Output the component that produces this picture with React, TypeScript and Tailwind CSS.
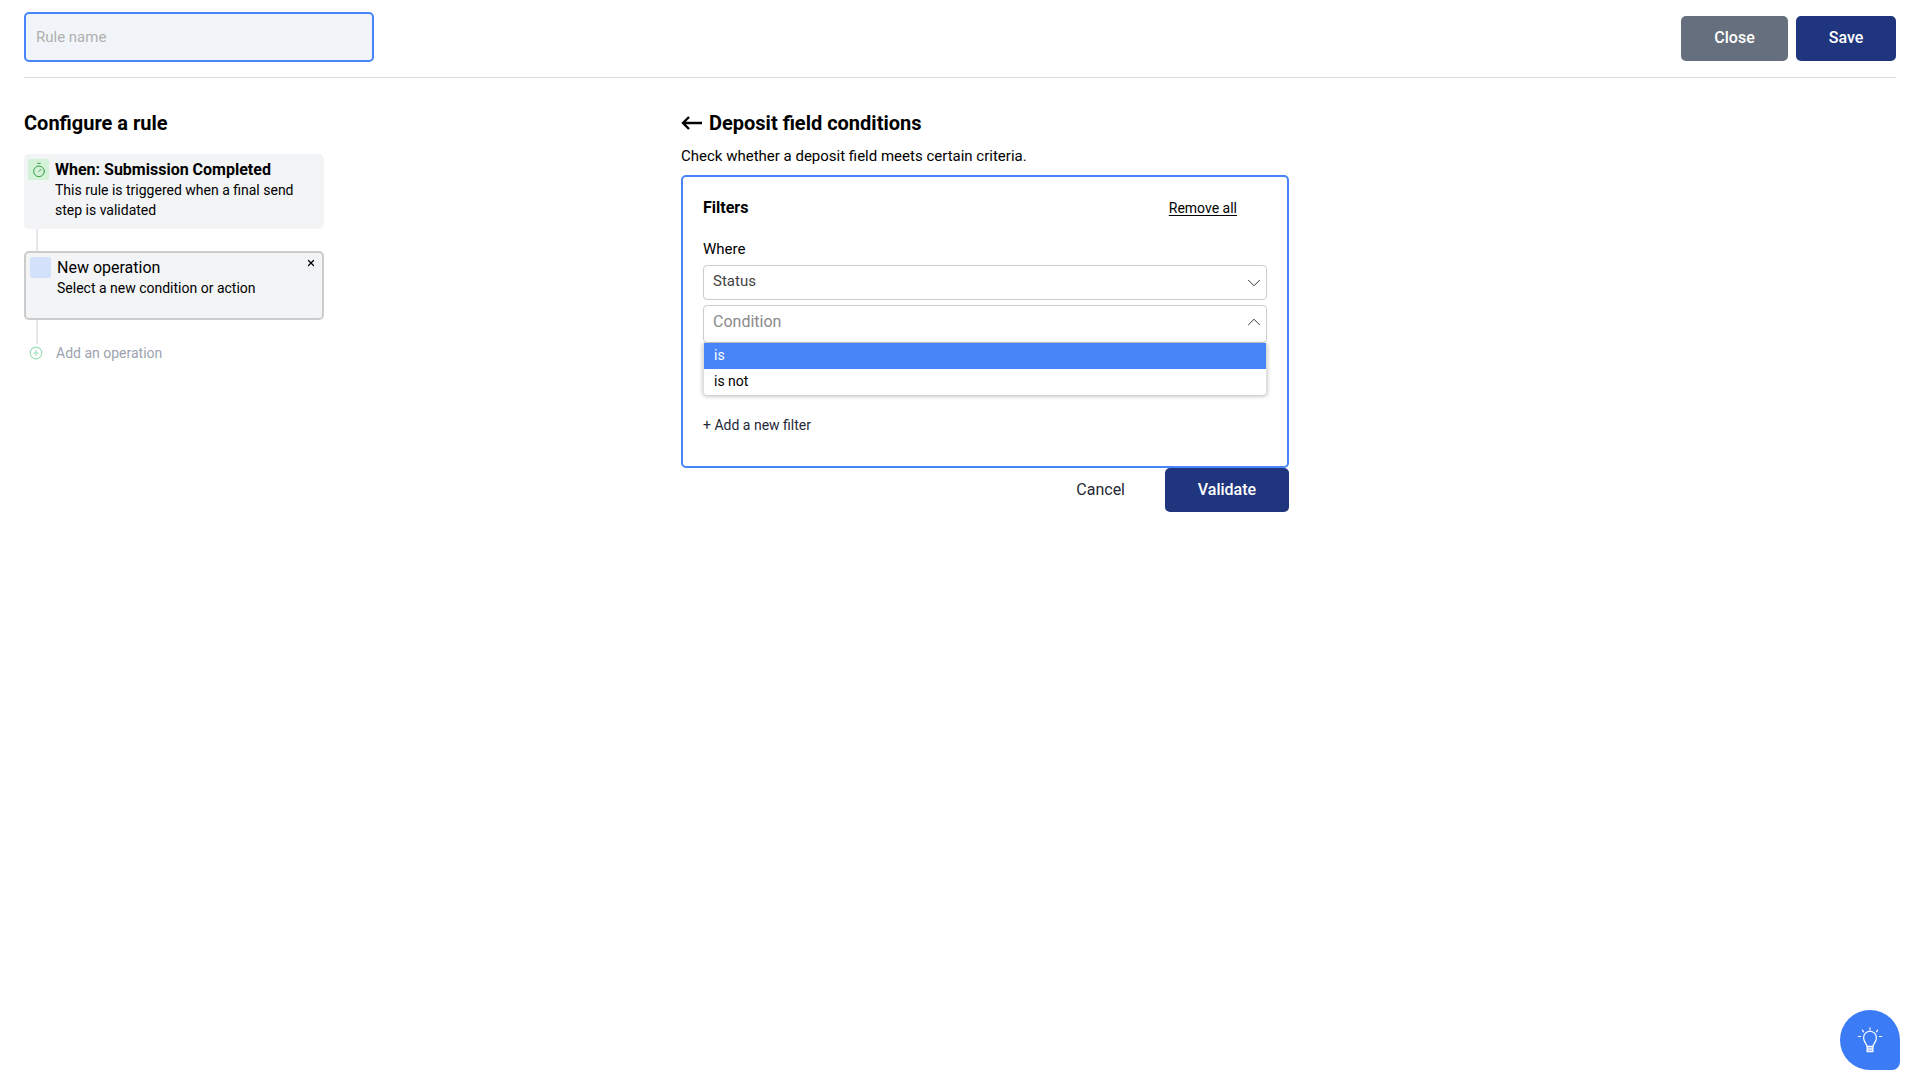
import { ChevronDown, ChevronUp, CirclePlus, Timer, X } from 'lucide-react';

export default function App() {
  return (
    <div className="min-h-[1080px] bg-white px-6 font-['Roboto',sans-serif] text-black">
      {/* Header */}
      <header className="flex h-[78px] items-start justify-between border-b border-[#d9d9e3] pt-3">
        <input
          placeholder="Rule name"
          className="h-[50px] w-[350px] rounded-[5px] border-2 border-[#4785f9] bg-[#f1f5f9] px-[10px] text-[15px] outline-none placeholder:text-[#b0b0b0]"
        />
        <div className="mt-1 flex gap-2">
          <button className="h-[45px] w-[107px] rounded-[5px] bg-[#666f7e] pb-[2px] text-[16px] font-medium text-white">Close</button>
          <button className="h-[45px] w-[100px] rounded-[5px] bg-[#1f357d] pb-[2px] text-[16px] font-medium text-white">Save</button>
        </div>
      </header>

      <div className="flex">
        {/* Rule steps */}
        <section className="w-[657px]">
          <h2 className="mt-[32px] text-[20px] leading-[26px] font-bold">Configure a rule</h2>
          <div className="mt-[18px] w-[300px]">
            <div className="flex h-[75px] gap-[6px] rounded-[5px] bg-[#f3f4f6] pt-[5px] pl-1">
              <div className="flex h-[21px] w-[21px] shrink-0 items-center justify-center rounded-[2px] bg-[#d3f2d8]">
                <Timer size={16} strokeWidth={1.5} className="text-[#36a14a]" />
              </div>
              <div>
                <div className="text-[16px] leading-[21px] font-bold">When: Submission Completed</div>
                <p className="w-[250px] text-[14px] leading-[20px]">This rule is triggered when a final send step is validated</p>
              </div>
            </div>
            <div className="ml-3 h-[22px] w-[2px] bg-[#e5e7eb]" />
            <div className="relative flex h-[69px] gap-[6px] rounded-[5px] border-2 border-[#cccccc] bg-[#f3f4f6] pt-1 pl-1">
              <div className="h-[21px] w-[21px] shrink-0 rounded-[2px] bg-[#d3e1fb]" />
              <div>
                <div className="text-[16px] leading-[21px]">New operation</div>
                <p className="text-[14px] leading-[20px]">Select a new condition or action</p>
              </div>
              <X size={10} strokeWidth={3} className="absolute top-[5px] right-[6px]" />
            </div>
            <div className="ml-3 h-[24px] w-[2px] bg-[#e5e7eb]" />
            <div className="flex h-[18px] items-center gap-[13px] pl-[5px] text-[14px] text-[#9ca3af]">
              <CirclePlus size={14} strokeWidth={2} className="text-[#9be0b8]" />
              Add an operation
            </div>
          </div>
        </section>

        {/* Deposit field conditions */}
        <section className="w-[608px]">
          <h2 className="mt-[32px] flex items-center gap-[7px] text-[20px] leading-[26px] font-bold">
            <svg width="21" height="14" viewBox="0 0 21 14" fill="none" stroke="black" strokeWidth="2.4" className="shrink-0">
              <path d="M2 7h19M8 1L2 7l6 6" />
            </svg>
            Deposit field conditions
          </h2>
          <p className="mt-[10px] text-[15px] leading-[20px]">Check whether a deposit field meets certain criteria.</p>
          <div className="mt-[9px] h-[293px] rounded-[5px] border-2 border-[#4785f9] px-5 pt-[20px]">
            <div className="flex items-center justify-between pr-[30px]">
              <div className="text-[16px] leading-[22px] font-bold">Filters</div>
              <a className="text-[14px] leading-[20px] underline underline-offset-2">Remove all</a>
            </div>
            <div className="mt-[20px] text-[15px] leading-[20px]">Where</div>
            <div className="mt-[6px] flex h-[35px] items-center justify-between rounded-[4px] border border-[#cccccc] pr-[1px] pb-[2px] pl-[9px] text-[15px] text-[#444444]">
              Status
              <ChevronDown size={22} strokeWidth={1} className="mt-[2px] text-[#222222]" />
            </div>
            <div className="relative mt-[5px]">
              <div className="flex h-[38px] items-center justify-between rounded-[4px] border border-[#cccccc] pr-[1px] pb-[5px] pl-[9px] text-[16px] text-[#8a8a8a]">
                Condition
                <ChevronUp size={22} strokeWidth={1} className="text-[#222222]" />
              </div>
              <ul className="absolute top-[38px] right-0 left-0 rounded-b-[4px] border-x border-[#e0e0e0] bg-white text-[14px] shadow-[0_1px_4px_rgba(0,0,0,0.3)]">
                <li className="flex h-[26px] items-center bg-[#4785f9] pb-[1px] pl-[10px] text-white">is</li>
                <li className="flex h-[26px] items-center pb-[1px] pl-[10px]">is not</li>
              </ul>
            </div>
            <div className="mt-[72px] text-[14px] leading-[20px] text-[#1f2937]">+ Add a new filter</div>
          </div>
          <div className="flex items-center justify-end gap-[40px]">
            <button className="pb-[1px] text-[16px] text-[#1f2937]">Cancel</button>
            <button className="h-[44px] w-[124px] rounded-[5px] bg-[#1f357d] text-[16px] font-medium text-white">Validate</button>
          </div>
        </section>
      </div>

      {/* Help button */}
      <button className="fixed right-5 bottom-2.5 flex h-[60px] w-[60px] items-center justify-center rounded-[30px_30px_8px_30px] bg-[#3b7cf6]">
        <svg width="28" height="28" viewBox="0 0 24 24" fill="none" stroke="white" strokeWidth="1" strokeLinecap="round" strokeLinejoin="round">
          <path d="M12 1.500v2M5.500 3.500l1 1.500M18.500 3.500l-1 1.500M2 9h2M20 9h2" />
          <path d="M9.500 17.500c0-2-3-3.500-3-7.500a5.500 5.500 0 0 1 11 0c0 4-3 5.500-3 7.500z" />
          <path d="M9.500 17.500v4.500h5v-4.500M9.500 19h5M9.500 20.500h5" />
        </svg>
      </button>
    </div>
  );
}
